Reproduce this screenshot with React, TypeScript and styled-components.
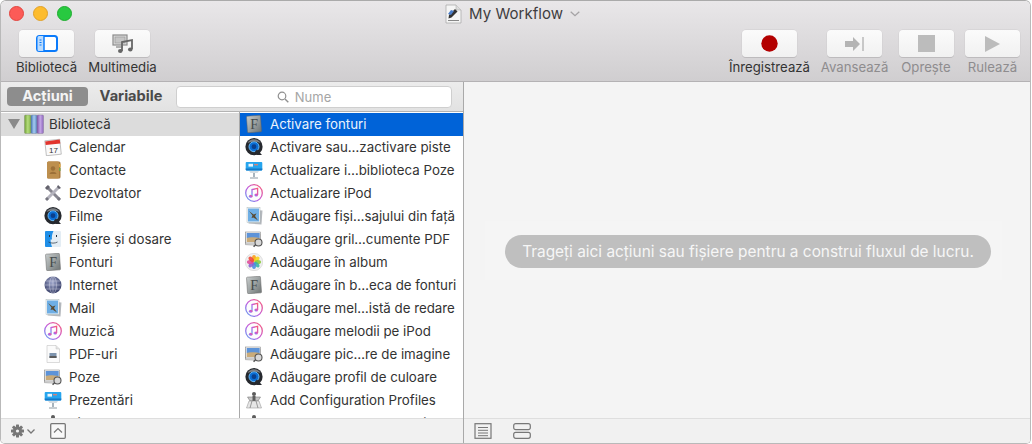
import React from "react";
import styled, { createGlobalStyle } from "styled-components";

const Global = createGlobalStyle`
  html, body { margin: 0; padding: 0; background: #fff; }
  body { font-family: Inter, "Liberation Sans", sans-serif; -webkit-font-smoothing: antialiased; }
`;

const Win = styled.div`
  width: 1031px;
  height: 444px;
  box-sizing: border-box;
  border: 1px solid #b9b9b9;
  border-top-color: #aaa;
  border-radius: 6px 6px 5px 5px;
  overflow: hidden;
  display: flex;
  flex-direction: column;
`;

const Head = styled.header`
  height: 81px;
  flex: none;
  box-sizing: border-box;
  border-bottom: 1px solid #b4b2b4;
  background: linear-gradient(#e9e7e9, #d0ced0);
  display: flex;
  flex-direction: column;
`;

const TitleBar = styled.div`
  height: 25px;
  flex: none;
  display: grid;
  grid-template-columns: 444px auto 1fr;
  align-items: center;
`;

const Lights = styled.div`
  display: flex;
  gap: 9px;
  padding-left: 8px;
`;

const Light = styled.span<{ $c: string; $b: string }>`
  width: 15px;
  height: 15px;
  box-sizing: border-box;
  border-radius: 50%;
  background: ${(p) => p.$c};
  border: 1px solid ${(p) => p.$b};
`;

const Title = styled.div`
  display: flex;
  align-items: center;
  gap: 7px;
  font-size: 15px;
  color: #3f3d3f;
  letter-spacing: 0.05px;
`;

const Tools = styled.div`
  display: flex;
  justify-content: space-between;
  padding: 4px 9px 0 14px;
`;

const ToolGroup = styled.div`
  display: flex;
  gap: 10px;
`;

const Tool = styled.div<{ $w: number; $off?: boolean }>`
  width: ${(p) => p.$w}px;
  display: flex;
  flex-direction: column;
  align-items: center;
  gap: 3px;
  font-size: 13.2px;
  line-height: 15px;
  white-space: nowrap;
  color: ${(p) => (p.$off ? "#8e8c8e" : "#333")};
`;

const ToolBtn = styled.div`
  width: 55px;
  height: 27px;
  flex: none;
  border-radius: 4px;
  background: linear-gradient(#fbfbfb, #f1f1f1);
  box-shadow: 0 1px 0 #bdbbbd, 0 0 0 0.5px #d0ced0;
  display: flex;
  align-items: center;
  justify-content: center;
`;

const Body = styled.div`
  flex: 1;
  min-height: 0;
  display: flex;
`;

const LeftPane = styled.section`
  width: 462px;
  flex: none;
  border-right: 1px solid #a9a9a9;
  display: flex;
  flex-direction: column;
`;

const TabsRow = styled.div`
  height: 30px;
  flex: none;
  box-sizing: border-box;
  border-bottom: 1px solid #b3b3b3;
  background: linear-gradient(#ececec, #e2e2e2);
  display: flex;
  align-items: center;
  padding: 0 11px 1px 6px;
`;

const Tab = styled.div<{ $on?: boolean }>`
  width: ${(p) => (p.$on ? 81 : 76)}px;
  height: 19px;
  flex: none;
  border-radius: 4px;
  display: flex;
  align-items: center;
  justify-content: center;
  font-size: 14.6px;
  font-weight: 700;
  background: ${(p) => (p.$on ? "#8d8d8d" : "transparent")};
  color: ${(p) => (p.$on ? "#f4f4f4" : "#4b4b4b")};
  margin-right: ${(p) => (p.$on ? 0 : 7)}px;
  margin-left: ${(p) => (p.$on ? 0 : 5)}px;
`;

const Search = styled.div`
  flex: 1;
  height: 22px;
  margin-top: 1px;
  box-sizing: border-box;
  background: #fff;
  border: 1px solid #cfcfcf;
  border-radius: 4px;
  display: flex;
  align-items: center;
  justify-content: center;
  gap: 6px;
  padding-right: 20px;
  font-size: 13px;
  color: #a5a5a5;
`;

const Columns = styled.div`
  flex: 1;
  min-height: 0;
  display: flex;
  background: #fff;
`;

const ListCol = styled.div<{ $w: number }>`
  width: ${(p) => p.$w}px;
  flex: none;
  overflow: hidden;
  padding-top: 1px;
  box-sizing: border-box;
  & + & { border-left: 1px solid #a9a9a9; }
`;

const Row = styled.div<{ $bg?: string; $fg?: string; $pad: number; $gap?: number }>`
  height: 23px;
  box-sizing: border-box;
  padding-bottom: 2px;
  display: flex;
  align-items: center;
  gap: ${(p) => p.$gap ?? 7}px;
  padding-left: ${(p) => p.$pad}px;
  background: ${(p) => p.$bg || "transparent"};
  color: ${(p) => p.$fg || "#333"};
  font-size: 13.3px;
  white-space: nowrap;
  & > svg { flex: none; }
`;

const Caret = styled.span`
  width: 0;
  height: 0;
  border-left: 6px solid transparent;
  border-right: 6px solid transparent;
  border-top: 10px solid #8a8a8a;
  margin-right: -1px;
`;

const Bar = styled.div`
  height: 25px;
  flex: none;
  box-sizing: border-box;
  border-top: 1px solid #dedede;
  background: #f1f1f1;
  display: flex;
  align-items: center;
`;

const LeftBar = styled(Bar)`
  padding-left: 10px;
  gap: 15px;
`;

const RightBar = styled(Bar)`
  padding-left: 10px;
  gap: 21px;
`;

const RightPane = styled.section`
  flex: 1;
  display: flex;
  flex-direction: column;
  background: #f4f4f4;
`;

const Canvas = styled.div`
  flex: 1;
  display: flex;
  align-items: center;
  justify-content: center;
  padding: 0 7px 0 0;
`;

const DropZone = styled.div`
  padding: 14px 11px 12px 20px;
  background: #f5f5f5;
`;

const Hint = styled.div`
  height: 33px;
  width: 486px;
  border-radius: 17px;
  background: #bfbfbf;
  color: #f6f6f6;
  font-size: 15.4px;
  display: flex;
  align-items: center;
  justify-content: center;
  white-space: nowrap;
`;

type IconProps = { s?: number };

const FontIco = ({ s = 18 }: IconProps) => (
  <svg width={s} height={s} viewBox="0 0 18 18">
    <defs>
      <linearGradient id="fg" x1="0" y1="0" x2="1" y2="1">
        <stop offset="0" stopColor="#c8cdcd" />
        <stop offset="1" stopColor="#6f7575" />
      </linearGradient>
    </defs>
    <rect x="2" y=".7" width="14" height="16.600" rx="1" fill="url(#fg)" stroke="#666" strokeWidth=".5" transform="rotate(-4 9 9)" />
    <text x="9.200" y="14" fontSize="14" fontFamily="Liberation Serif, serif" textAnchor="middle" fill="#44494a">F</text>
  </svg>
);

const QuickTime = ({ s = 18 }: IconProps) => (
  <svg width={s} height={s} viewBox="0 0 18 18">
    <circle cx="9" cy="8.700" r="8.600" fill="#26292e" />
    <circle cx="9" cy="8.700" r="5" fill="#0b6fd6" stroke="#69b8f5" strokeWidth="1" />
    <circle cx="9" cy="8.700" r="2.400" fill="#0a3f8c" />
    <path d="M12 11.500l5 5.500h-5l-2-3.500z" fill="#26292e" />
    <path d="M2.500 5a7.500 7.500 0 0 1 13 0a9 5 0 0 0-13 0z" fill="#9a9ea3" opacity=".75" />
  </svg>
);

const Keynote = ({ s = 18 }: IconProps) => (
  <svg width={s} height={s} viewBox="0 0 18 18">
    <path d="M8 11h2v5H8z" fill="#a8b4bd" />
    <path d="M5 16.500h8v1H5z" fill="#8e9aa3" />
    <rect x=".7" y="1" width="16.600" height="8.500" rx="1" fill="#26a5ee" />
    <path d="M.7 7.500h16.600v1a1 1 0 0 1-1 1H1.700a1 1 0 0 1-1-1z" fill="#1279c8" />
    <path d="M4 10h10l-1.500 2h-7z" fill="#d6dde2" />
    <rect x="3.500" y="2.800" width="4.500" height="2.800" fill="#fff" opacity=".9" />
    <rect x="9" y="3.200" width="4" height="1.100" fill="#ff7a5c" />
  </svg>
);

const Music = ({ s = 18 }: IconProps) => (
  <svg width={s} height={s} viewBox="0 0 18 18">
    <defs>
      <linearGradient id="mg" x1="1" y1="0" x2="0" y2="1">
        <stop offset="0" stopColor="#fb5c74" />
        <stop offset=".55" stopColor="#c05ce0" />
        <stop offset="1" stopColor="#5aa8f4" />
      </linearGradient>
    </defs>
    <circle cx="9" cy="9" r="8.300" fill="#fdfdfd" stroke="url(#mg)" strokeWidth="1.300" />
    <path d="M7 12.200V5.600l5.600-1.200v6.600" fill="none" stroke="url(#mg)" strokeWidth="1.300" />
    <ellipse cx="5.700" cy="12.300" rx="1.800" ry="1.500" fill="url(#mg)" />
    <ellipse cx="11.200" cy="11.100" rx="1.800" ry="1.500" fill="url(#mg)" />
  </svg>
);

const Stamp = ({ s = 18 }: IconProps) => (
  <svg width={s} height={s} viewBox="0 0 18 18">
    <rect x="4" y="3" width="13" height="14" fill="#b4b8bd" transform="rotate(4 10 10)" />
    <rect x="2" y=".5" width="13" height="15" fill="#f4f6f8" stroke="#9aa" strokeWidth=".4" />
    <rect x="3" y="1.500" width="11" height="13" fill="#6eaee4" />
    <path d="M4 4l4.500 3.500 3-1-1.500 2.500 3 4.500-4.500-3-2 .5 1-2.500z" fill="#5b4a30" />
  </svg>
);

const Photo = ({ s = 18 }: IconProps) => (
  <svg width={s} height={s} viewBox="0 0 18 18">
    <rect x=".7" y="4" width="14.500" height="11" fill="#e9e9e9" stroke="#777" strokeWidth=".5" transform="rotate(3 8 9)" />
    <rect x=".7" y="2" width="15" height="11" fill="#f4f4f4" stroke="#777" strokeWidth=".5" />
    <rect x="1.700" y="3" width="13" height="5" fill="#5d93d8" />
    <path d="M1.700 8c4-1.500 8-.5 13 0v4h-13z" fill="#c9ab7a" />
    <circle cx="13.500" cy="12.500" r="3.500" fill="#d8d8d8" stroke="#555" strokeWidth="1.100" />
    <path d="M10.500 15l-2 1.600" stroke="#555" strokeWidth="1.600" />
  </svg>
);

const Flower = ({ s = 18 }: IconProps) => (
  <svg width={s} height={s} viewBox="0 0 18 18">
    <circle cx="9" cy="9" r="8.700" fill="#f1f1f1" stroke="#c8c8c8" strokeWidth=".5" />
    {["#f9a11b", "#f6d31c", "#8ccb3c", "#3cb5a5", "#4a8ee0", "#8d62cf", "#e0509c", "#ef4b3e"].map((c, i) => (
      <ellipse key={c} cx="9" cy="5.200" rx="2" ry="3.300" fill={c} opacity=".9" transform={`rotate(${i * 45} 9 9)`} />
    ))}
  </svg>
);

const Calendar = ({ s = 18 }: IconProps) => (
  <svg width={s} height={s} viewBox="0 0 18 18">
    <rect x="1.500" y="2" width="15" height="15" fill="#fafafa" stroke="#8a8a8a" strokeWidth=".5" transform="rotate(-6 9 9)" />
    <path d="M1.200 3.500l14.500-2 .6 4-14.600 1.600z" fill="#e2352e" />
    <text x="9.400" y="14.600" fontSize="8" fontFamily="Liberation Sans, sans-serif" textAnchor="middle" fill="#333">17</text>
  </svg>
);

const Contacts = ({ s = 18 }: IconProps) => (
  <svg width={s} height={s} viewBox="0 0 18 18">
    <rect x="3" y=".5" width="13.500" height="17" rx="1.500" fill="#a9793c" />
    <rect x="3" y=".5" width="12" height="17" rx="1.500" fill="#bd8f4e" />
    <circle cx="9" cy="7.500" r="2.200" fill="#9c7038" />
    <path d="M5.500 13c.5-3 6.500-3 7 0z" fill="#9c7038" />
    <path d="M15 3h1.500v3H15z" fill="#e0a83a" />
    <path d="M15 7h1.500v3H15z" fill="#6ea34a" />
  </svg>
);

const Developer = ({ s = 18 }: IconProps) => (
  <svg width={s} height={s} viewBox="0 0 18 18">
    <path d="M2.500 2.500l13 13" stroke="#86858f" strokeWidth="3" />
    <path d="M15.500 2.500l-13 13" stroke="#b4b3bd" strokeWidth="3" />
    <path d="M1 4l3-3 2 2-3 3zM14 1l3 3-2 1-2-2z" fill="#63626c" />
    <path d="M1 15l2 2 2-2-2-2zM13 15l2 2 2-2-2-2z" fill="#777680" />
  </svg>
);

const Finder = ({ s = 18 }: IconProps) => (
  <svg width={s} height={s} viewBox="0 0 18 18">
    <rect x="1" y="1" width="16" height="16" rx="1" fill="#e4edf4" />
    <path d="M2 1h7.500c-1.500 3-2 6-1.500 8.500H6.500c0 2.500.5 5 1.500 7.500H2a1 1 0 0 1-1-1V2a1 1 0 0 1 1-1z" fill="#1f8fe8" />
    <path d="M5.500 5v2M12.500 5v2" stroke="#23323f" strokeWidth="1" />
    <path d="M4.500 12c2.500 1.500 6.500 1.500 9 0" stroke="#23323f" strokeWidth=".7" fill="none" />
  </svg>
);

const Globe = ({ s = 18 }: IconProps) => (
  <svg width={s} height={s} viewBox="0 0 18 18">
    <defs>
      <radialGradient id="gg" cx=".45" cy=".35" r=".7">
        <stop offset="0" stopColor="#9ea6cb" />
        <stop offset="1" stopColor="#2f365f" />
      </radialGradient>
    </defs>
    <circle cx="9" cy="9" r="8.500" fill="url(#gg)" />
    <g fill="none" stroke="#e4e7f2" strokeWidth=".5" opacity=".8">
      <ellipse cx="9" cy="9" rx="3.500" ry="8.500" />
      <path d="M.5 9h17M2 5h14M2 13h14M9 .5v17" />
    </g>
  </svg>
);

const Pdf = ({ s = 18 }: IconProps) => (
  <svg width={s} height={s} viewBox="0 0 18 18">
    <path d="M3 .5h9l3.500 3.500v13.500H3z" fill="#fbfbfb" stroke="#c4c4c4" strokeWidth=".6" />
    <path d="M12 .5V4h3.500" fill="#e2e2e2" stroke="#c4c4c4" strokeWidth=".5" />
    <rect x="5.500" y="8" width="7" height="5" fill="#7d93ad" />
    <rect x="5.500" y="11" width="7" height="2" fill="#5a5a5a" />
  </svg>
);

const Config = ({ s = 18 }: IconProps) => (
  <svg width={s} height={s} viewBox="0 0 18 18">
    <circle cx="9" cy="3" r="2" fill="#5c5c5c" />
    <path d="M2.500 6h13l-2.500 4H5z" fill="#c6c6c6" stroke="#666" strokeWidth=".5" />
    <path d="M7.500 5h3v5h-3z" fill="#5c5c5c" />
    <path d="M4 10h10l2.500 7h-15z" fill="#e6e6e6" stroke="#8a8a8a" strokeWidth=".5" />
    <path d="M7 10l-2 7M11 10l2 7" stroke="#777" strokeWidth=".7" />
  </svg>
);

const Books = () => (
  <svg width="20" height="20" viewBox="0 0 20 20">
    <defs>
      <linearGradient id="bk1" x1="0" x2="1" y1="0" y2="0">
        <stop offset="0" stopColor="#6f9f35" />
        <stop offset=".5" stopColor="#b4dc7c" />
        <stop offset="1" stopColor="#7eb044" />
      </linearGradient>
      <linearGradient id="bk2" x1="0" x2="1" y1="0" y2="0">
        <stop offset="0" stopColor="#4878b8" />
        <stop offset=".5" stopColor="#a6cbf0" />
        <stop offset="1" stopColor="#5a8bc8" />
      </linearGradient>
      <linearGradient id="bk3" x1="0" x2="1" y1="0" y2="0">
        <stop offset="0" stopColor="#7a52ab" />
        <stop offset=".5" stopColor="#c4a6e6" />
        <stop offset="1" stopColor="#8d66bd" />
      </linearGradient>
    </defs>
    <rect x="0.500" y="1" width="6.500" height="18.500" rx="1" fill="url(#bk1)" stroke="#7d8b70" strokeWidth=".4" />
    <rect x="7" y="1" width="6" height="18.500" rx="1" fill="url(#bk2)" stroke="#6d7f95" strokeWidth=".4" />
    <rect x="13" y="1" width="6.500" height="18.500" rx="1" fill="url(#bk3)" stroke="#7d7090" strokeWidth=".4" />
  </svg>
);

const DocIco = () => (
  <svg width="17" height="20" viewBox="0 0 17 20">
    <path d="M1 1h10l5 5v13H1z" fill="#f5f5f5" stroke="#a5a5a5" strokeWidth=".7" />
    <path d="M11 1v5h5" fill="#dcdcdc" stroke="#a5a5a5" strokeWidth=".5" />
    <path d="M4 11l6-6 2.500 2.500-6 6-3 1z" fill="#333" />
    <path d="M3 10l3-4 3 1-3 4z" fill="#4a7cc8" />
    <path d="M3 16.500h11" stroke="#888" strokeWidth="1" />
  </svg>
);

const SidebarIco = () => (
  <svg width="22" height="17" viewBox="0 0 22 17">
    <rect x="1" y="1" width="20" height="15" rx="2.500" fill="#fff" stroke="#0b7bfb" strokeWidth="2" />
    <path d="M1.500 2.500a1.500 1.500 0 0 1 1.500-1.500h5v15H3a1.500 1.500 0 0 1-1.500-1.500z" fill="#bcdcfd" />
    <path d="M8 1v15" stroke="#0b7bfb" strokeWidth="1.500" />
    <path d="M3.500 5h2M3.500 7.500h2M3.500 10h2" stroke="#0b7bfb" strokeWidth="1" />
  </svg>
);

const MediaIco = () => (
  <svg width="22" height="20" viewBox="0 0 22 20">
    <rect x="1" y="1" width="14" height="10" fill="#dcdcdc" stroke="#8b8b8b" strokeWidth="1.200" />
    <rect x="3" y="3" width="10" height="6" fill="#c5c5c5" stroke="#9a9a9a" strokeWidth=".7" />
    <path d="M4 13h7" stroke="#9a9a9a" strokeWidth="1.500" />
    <path d="M10 17V8l10-2v9" fill="none" stroke="#666" strokeWidth="1.800" />
    <ellipse cx="8.300" cy="17" rx="2.300" ry="1.900" fill="#666" />
    <ellipse cx="18.300" cy="15.500" rx="2.300" ry="1.900" fill="#666" />
  </svg>
);

const StepIco = () => (
  <svg width="20" height="14" viewBox="0 0 20 14">
    <path d="M0 4h8V0l7 7-7 7v-4H0z" fill="#b4b4b4" />
    <path d="M18 0v14" stroke="#9a9a9a" strokeWidth="1" />
  </svg>
);

const Gear = () => (
  <svg width="24" height="14" viewBox="0 0 24 14">
    <g fill="#777">
      {[0, 45, 90, 135].map((r) => (
        <rect key={r} x="5" y="0.500" width="3" height="13" rx=".5" transform={`rotate(${r} 6.500 7)`} />
      ))}
    </g>
    <circle cx="6.500" cy="7" r="4.500" fill="#777" />
    <circle cx="6.500" cy="7" r="1.600" fill="#f1f1f1" />
    <path d="M16.500 5.500l3.500 3.500 3.500-3.500" fill="none" stroke="#777" strokeWidth="1.300" />
  </svg>
);

const PanelToggle = () => (
  <svg width="16" height="16" viewBox="0 0 16 16">
    <rect x=".7" y=".7" width="14.600" height="14.600" rx="1" fill="#f8f8f8" stroke="#777" strokeWidth="1.300" />
    <path d="M4 9.500l4-4 4 4" fill="none" stroke="#777" strokeWidth="1.200" />
  </svg>
);

const ListViewIco = () => (
  <svg width="18" height="16" viewBox="0 0 18 16">
    <rect x="1" y=".7" width="16" height="14.600" fill="none" stroke="#777" strokeWidth="1.200" />
    <path d="M4 4.500h10M4 7.300h10M4 10h10M4 12.700h10" stroke="#777" strokeWidth="1" />
  </svg>
);

const SplitViewIco = () => (
  <svg width="18" height="16" viewBox="0 0 18 16">
    <rect x=".7" y=".7" width="16.600" height="6" rx="2" fill="none" stroke="#777" strokeWidth="1.200" />
    <rect x=".7" y="9.300" width="16.600" height="6" rx="2" fill="none" stroke="#777" strokeWidth="1.200" />
  </svg>
);

const categories: [string, React.FC<IconProps>][] = [
  ["Calendar", Calendar],
  ["Contacte", Contacts],
  ["Dezvoltator", Developer],
  ["Filme", QuickTime],
  ["Fișiere și dosare", Finder],
  ["Fonturi", FontIco],
  ["Internet", Globe],
  ["Mail", Stamp],
  ["Muzică", Music],
  ["PDF-uri", Pdf],
  ["Poze", Photo],
  ["Prezentări", Keynote],
  ["Sistem", Config],
];

const actions: [string, React.FC<IconProps>][] = [
  ["Activare fonturi", FontIco],
  ["Activare sau…zactivare piste", QuickTime],
  ["Actualizare i…biblioteca Poze", Keynote],
  ["Actualizare iPod", Music],
  ["Adăugare fiși…sajului din față", Stamp],
  ["Adăugare gril…cumente PDF", Photo],
  ["Adăugare în album", Flower],
  ["Adăugare în b…eca de fonturi", FontIco],
  ["Adăugare mel…istă de redare", Music],
  ["Adăugare melodii pe iPod", Music],
  ["Adăugare pic…re de imagine", Photo],
  ["Adăugare profil de culoare", QuickTime],
  ["Add Configuration Profiles", Config],
  ["Add Package…nstall Script", Config],
];

export default function App() {
  return (
    <Win>
      <Global />
      <Head>
        <TitleBar>
          <Lights>
            <Light $c="#fc5b57" $b="#e2453f" />
            <Light $c="#fdbc2e" $b="#e0a028" />
            <Light $c="#28c940" $b="#1fac2f" />
          </Lights>
          <Title>
            <DocIco />
            My Workflow
            <svg width="10" height="6" viewBox="0 0 10 6">
              <path d="M.7.7L5 4.700 9.300.7" fill="none" stroke="#a5a3a5" strokeWidth="1.300" />
            </svg>
          </Title>
        </TitleBar>
        <Tools>
          <ToolGroup>
            <Tool $w={63}>
              <ToolBtn><SidebarIco /></ToolBtn>
              Bibliotecă
            </Tool>
            <Tool $w={69}>
              <ToolBtn><MediaIco /></ToolBtn>
              Multimedia
            </Tool>
          </ToolGroup>
          <ToolGroup>
            <Tool $w={83}>
              <ToolBtn>
                <svg width="17" height="17" viewBox="0 0 17 17"><circle cx="8.500" cy="8.500" r="8.200" fill="#b30000" /></svg>
              </ToolBtn>
              Înregistrează
            </Tool>
            <Tool $w={67} $off>
              <ToolBtn><StepIco /></ToolBtn>
              Avansează
            </Tool>
            <Tool $w={56} $off>
              <ToolBtn>
                <svg width="17" height="17" viewBox="0 0 17 17"><rect width="17" height="17" fill="#bcbcbc" /></svg>
              </ToolBtn>
              Oprește
            </Tool>
            <Tool $w={57} $off>
              <ToolBtn>
                <svg width="15" height="16" viewBox="0 0 15 16"><path d="M0 0l15 8-15 8z" fill="#bcbcbc" /></svg>
              </ToolBtn>
              Rulează
            </Tool>
          </ToolGroup>
        </Tools>
      </Head>
      <Body>
        <LeftPane>
          <TabsRow>
            <Tab $on>Acțiuni</Tab>
            <Tab>Variabile</Tab>
            <Search>
              <svg width="12" height="12" viewBox="0 0 12 12">
                <circle cx="5" cy="5" r="3.800" fill="none" stroke="#8f8f8f" strokeWidth="1.200" />
                <path d="M8 8l3.300 3.300" stroke="#8f8f8f" strokeWidth="1.400" />
              </svg>
              Nume
            </Search>
          </TabsRow>
          <Columns>
            <ListCol $w={238}>
              <Row $pad={7} $gap={5} $bg="#dcdcdc">
                <Caret />
                <Books />
                Bibliotecă
              </Row>
              {categories.map(([name, Icon]) => (
                <Row key={name} $pad={43}>
                  <Icon />
                  {name}
                </Row>
              ))}
            </ListCol>
            <ListCol $w={224}>
              {actions.map(([name, Icon], i) => (
                <Row key={name} $pad={5} $bg={i === 0 ? "#0063d8" : undefined} $fg={i === 0 ? "#eaf2fc" : undefined}>
                  <Icon />
                  {name}
                </Row>
              ))}
            </ListCol>
          </Columns>
          <LeftBar>
            <Gear />
            <PanelToggle />
          </LeftBar>
        </LeftPane>
        <RightPane>
          <Canvas>
            <DropZone>
              <Hint>Trageți aici acțiuni sau fișiere pentru a construi fluxul de lucru.</Hint>
            </DropZone>
          </Canvas>
          <RightBar>
            <ListViewIco />
            <SplitViewIco />
          </RightBar>
        </RightPane>
      </Body>
    </Win>
  );
}
